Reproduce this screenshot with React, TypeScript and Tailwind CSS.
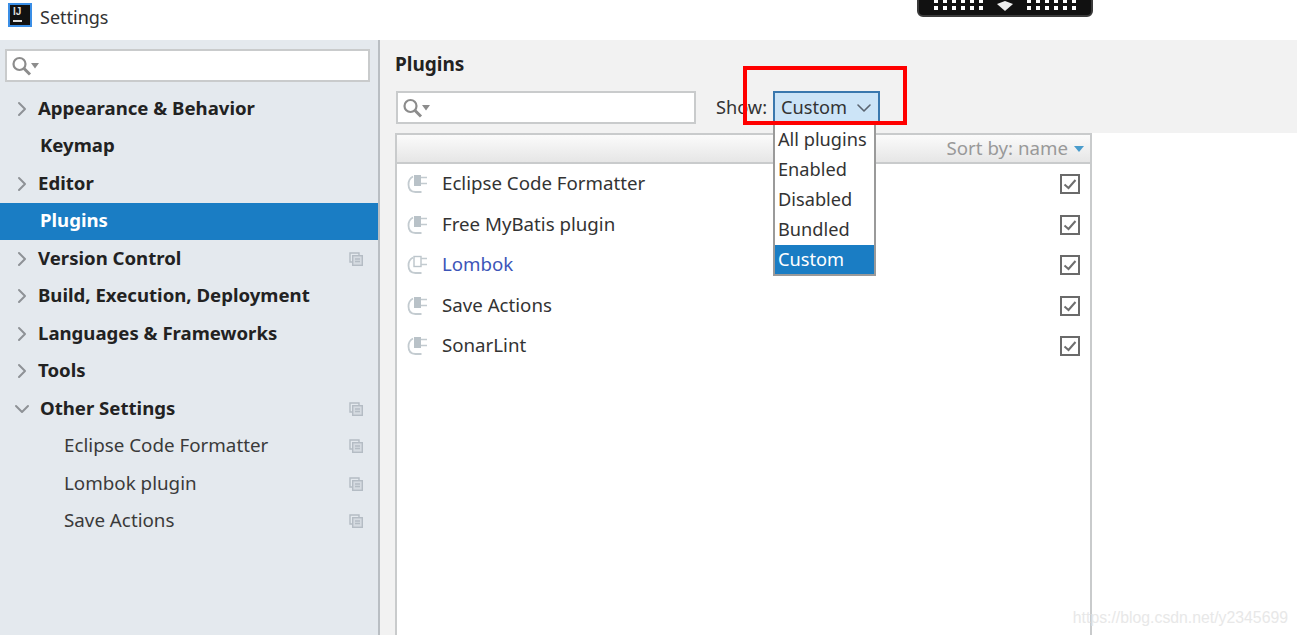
import { ChevronDown, ChevronRight } from "lucide-react";

const font = "font-['Noto_Sans','Open_Sans',sans-serif]";

function SearchBox({ className }: { className: string }) {
  return (
    <div className={`flex items-center bg-white border-2 border-[#c9cbcc] pl-[5px] ${className}`}>
      <svg width="28" height="22" viewBox="0 0 28 22" fill="none">
        <circle cx="7.5" cy="9" r="6" stroke="#8c8c8c" strokeWidth="2.2" />
        <path d="M12 13.5l6 6" stroke="#8c8c8c" strokeWidth="3" />
        <path d="M19 8h8l-4 5.5z" fill="#8c8c8c" />
      </svg>
    </div>
  );
}

function CopyIcon() {
  return (
    <svg width="14" height="14" viewBox="0 0 14 14" fill="none" stroke="#b4bcc4" strokeWidth="1.4">
      <path d="M10 3V1H1v9h2" />
      <rect x="3.7" y="3.7" width="9.6" height="9.6" fill="#d5dbe1" />
      <path d="M6 7h5M6 9.5h5" />
    </svg>
  );
}

function PlugIcon({ hollow }: { hollow?: boolean }) {
  return (
    <svg width="22" height="22" viewBox="0 0 22 22" fill="none">
      <path d="M6 3.5C2.8 5 1.5 7.5 1.5 11.5c0 4.5 2.5 7.5 7 7.5h6" stroke="#c3cbd0" strokeWidth="1.8" />
      <rect
        x="7"
        y={hollow ? 2.5 : 2}
        width="7"
        height={hollow ? 10 : 11}
        fill={hollow ? "#ffffff" : "#b9c2c8"}
        stroke={hollow ? "#bcc5cb" : "none"}
        strokeWidth="1.4"
      />
      <path d="M14 4.5h6M14 10.5h6" stroke="#c3cbd0" strokeWidth="1.6" />
    </svg>
  );
}

function CheckBox() {
  return (
    <div className="w-[20px] h-[20px] border-2 border-[#6a6a6a] bg-white flex items-center justify-center">
      <svg width="16" height="16" viewBox="0 0 16 16" fill="none">
        <path d="M2.5 8.5l4 3.5 7-8" stroke="#6f6f6f" strokeWidth="2" />
      </svg>
    </div>
  );
}

function Dots() {
  return (
    <div className="flex flex-col gap-[3px]">
      {[0, 1].map((row) => (
        <div key={row} className="flex gap-[5px]">
          {[0, 1, 2, 3, 4, 5].map((i) => (
            <div key={i} className="w-[4px] h-[4px] bg-white" />
          ))}
        </div>
      ))}
    </div>
  );
}

const navItems = [
  { label: "Appearance & Behavior", arrow: true },
  { label: "Keymap" },
  { label: "Editor", arrow: true },
  { label: "Plugins", active: true },
  { label: "Version Control", arrow: true, copy: true },
  { label: "Build, Execution, Deployment", arrow: true },
  { label: "Languages & Frameworks", arrow: true },
  { label: "Tools", arrow: true },
  { label: "Other Settings", open: true, copy: true },
  { label: "Eclipse Code Formatter", child: true, copy: true },
  { label: "Lombok plugin", child: true, copy: true },
  { label: "Save Actions", child: true, copy: true },
];

const plugins = ["Eclipse Code Formatter", "Free MyBatis plugin", "Lombok", "Save Actions", "SonarLint"];

export default function App() {
  return (
    <div className={`relative h-[635px] w-[1297px] overflow-hidden bg-white text-[#222] ${font}`}>
      <div className="h-10 flex items-center pl-2 gap-[8px] pb-[10px]">
        <div className="w-6 h-6 bg-[#111] border-2 border-[#3a8ee6] pl-[3px] pt-[1px] leading-none">
          <div className="text-[10px] font-bold text-[#ddd] leading-[11px] font-['Liberation_Sans',sans-serif]">IJ</div>
          <div className="w-[9px] h-[2px] bg-[#ddd] mt-[3px]" />
        </div>
        <span className="text-[18px] text-[#333] mt-[4px]">Settings</span>
      </div>

      <div className="flex h-[595px]">
        <aside className="w-[380px] shrink-0 bg-[#e4e9ee] border-r-2 border-[#b9bec3] pt-[9px]">
          <SearchBox className="ml-[5px] w-[365px] h-[33px]" />
          <div className="mt-[8px]">
            {navItems.map((item) => (
              <div
                key={item.label}
                className={`h-[37.5px] flex items-center pr-[15px] ${
                  item.active ? "bg-[#1a7dc4] text-white" : ""
                } ${item.child ? "pl-[64px] font-normal text-[18.8px] text-[#3a3a3a]" : "font-bold text-[18.6px]"}`}
              >
                {!item.child && (
                  <span className={`${item.arrow ? "w-[38px]" : "w-[40px]"} shrink-0 flex justify-center ${item.arrow ? "pl-[5px]" : "pl-[4px]"}`}>
                    {item.arrow && <ChevronRight size={24} color="#8e9296" strokeWidth={2} />}
                    {item.open && <ChevronDown size={24} color="#8e9296" strokeWidth={2} />}
                  </span>
                )}
                <span className="flex-1 whitespace-nowrap -mt-[2px]">{item.label}</span>
                {item.copy && <CopyIcon />}
              </div>
            ))}
          </div>
        </aside>

        <main className="flex-1 flex flex-col bg-white">
          <div className="bg-[#f2f2f2] pt-[10px] pb-[9px] pl-[15px] h-[93px]">
            <h1 className="text-[19px] font-bold leading-[28px]">Plugins</h1>
            <div className="flex items-center mt-[13px]">
              <SearchBox className="ml-[1px] w-[300px] h-[33px]" />
              <span className="ml-[20px] text-[18.2px] text-[#333]">Show:</span>
              <div className="ml-[6px] w-[107px] h-[33px] border-2 border-[#3a78ae] bg-[#cce4f7] flex items-center pl-[6px] text-[18.2px] text-[#333]">
                <span className="flex-1">Custom</span>
                <ChevronDown size={24} color="#5a6470" strokeWidth={1.6} className="mr-[2px]" />
              </div>
            </div>
          </div>

          <div className="flex-1 flex">
            <div className="w-[712px] flex">
              <div className="w-[15px] bg-[#f2f2f2]" />
              <div className="w-[697px] border-x-2 border-t-2 border-[#c9cbcc]">
                <div className="h-[29px] bg-gradient-to-b from-[#fbfbfb] to-[#e6e6e6] border-b-2 border-[#c9cbcc] flex items-center justify-end pr-[6px] text-[18.7px] text-[#999]">
                  Sort by: name
                  <svg width="10" height="6" viewBox="0 0 10 6" className="ml-[6px]">
                    <path d="M0 0h10L5 6z" fill="#4a9ccc" />
                  </svg>
                </div>
                {plugins.map((name) => (
                  <div key={name} className="h-[40.5px] flex items-center pl-[10px] pr-[10px] text-[18.7px]">
                    <PlugIcon hollow={name === "Lombok"} />
                    <span className={`ml-[13px] flex-1 -mt-[2px] ${name === "Lombok" ? "text-[#3c55b8]" : "text-[#333]"}`}>
                      {name}
                    </span>
                    <CheckBox />
                  </div>
                ))}
              </div>
            </div>
          </div>
        </main>
      </div>

      {/* floating bits on top of the window */}
      <div className="absolute left-[917px] top-[-6px] w-[176px] h-[23px] bg-[#111] border-2 border-[#3a3a3a] rounded-md flex items-end justify-center gap-[14px] pb-[5px]">
        <Dots />
        <svg width="16" height="10" viewBox="0 0 16 10" className="-mb-[1px]">
          <path d="M0 3L8 0l8 3-8 7z" fill="#eee" />
        </svg>
        <Dots />
      </div>

      <div className="absolute left-[773px] top-[124px] w-[103px] h-[152px] bg-white border-2 border-t-0 border-[#9a9a9a] text-[18.2px] text-[#333] leading-[30px]">
        <div className="pl-[3px]">All plugins</div>
        <div className="pl-[3px]">Enabled</div>
        <div className="pl-[3px]">Disabled</div>
        <div className="pl-[3px] h-[31px]">Bundled</div>
        <div className="pl-[3px] h-[29px] leading-[28px] bg-[#1a7dc4] text-white">Custom</div>
      </div>

      <div className="absolute left-[743px] top-[66px] w-[164px] h-[59px] border-4 border-[#ff0000]" />

      <div className="absolute right-[9px] bottom-[5px] text-[15.8px] text-[#e8e8e8] font-['Liberation_Sans',sans-serif]">
        https://blog.csdn.net/y2345699
      </div>
    </div>
  );
}
